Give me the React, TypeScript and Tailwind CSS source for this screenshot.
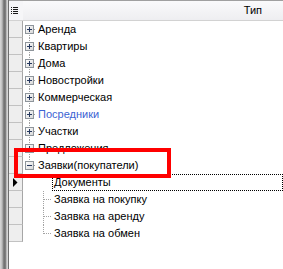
const FONT = "font-['Liberation_Sans',Arial,sans-serif]"

type Node = { label: string; level: 0 | 1; blue?: boolean; expanded?: boolean; focused?: boolean }

const NODES: Node[] = [
  { label: 'Аренда', level: 0 },
  { label: 'Квартиры', level: 0 },
  { label: 'Дома', level: 0 },
  { label: 'Новостройки', level: 0 },
  { label: 'Коммерческая', level: 0 },
  { label: 'Посредники', level: 0, blue: true },
  { label: 'Участки', level: 0 },
  { label: 'Предложения', level: 0 },
  { label: 'Заявки(покупатели)', level: 0, expanded: true },
  { label: 'Документы', level: 1, focused: true },
  { label: 'Заявка на покупку', level: 1 },
  { label: 'Заявка на аренду', level: 1 },
  { label: 'Заявка на обмен', level: 1 },
]

const LINE = '#a3a3a3'

// dotted connectors + expand box drawn for one row
function Gutter({ index }: { index: number }) {
  const node = NODES[index]
  if (node.level === 0) {
    const first = index === 0
    const last = index === 8
    return (
      <svg width="13" height="17" className="shrink-0">
        <defs>
          <linearGradient id={`bx${index}`} x1="0" y1="0" x2="1" y2="1">
            <stop offset="0" stopColor="#ffffff" />
            <stop offset="1" stopColor="#d6d6d6" />
          </linearGradient>
        </defs>
        <line x1="6.5" y1={first ? 8 : 0} x2="6.5" y2={last ? 8 : 17} stroke={LINE} strokeDasharray="1 1" />
        <line x1="11" y1="8.5" x2="13" y2="8.5" stroke={LINE} strokeDasharray="1 1" />
        <rect x="2.5" y="4.5" width="8" height="8" fill={`url(#bx${index})`} stroke="#8e959b" />
        <line x1="4" y1="8.5" x2="9" y2="8.5" stroke="#24375e" />
        {!node.expanded && <line x1="6.5" y1="6" x2="6.5" y2="11" stroke="#24375e" />}
      </svg>
    )
  }
  const j = index - 9
  return (
    <svg width="29" height="17" className="shrink-0">
      {j > 0 && (
        <>
          <line x1="20.5" y1="0" x2="20.5" y2={j === 3 ? 9 : 17} stroke={LINE} strokeDasharray="1 1" />
          <line x1="21" y1="8.5" x2="29" y2="8.5" stroke={LINE} strokeDasharray="1 1" />
        </>
      )}
    </svg>
  )
}

function ListIcon() {
  return (
    <svg width="7" height="8" className="block">
      {[0, 2, 4, 6].map(y => (
        <g key={y}>
          <rect x="0" y={y} width="1" height="1" fill="#1a1a1a" />
          <rect x="2" y={y} width="5" height="1" fill="#1a1a1a" />
        </g>
      ))}
    </svg>
  )
}

export default function App() {
  return (
    <div className={`relative w-[283px] h-[269px] overflow-hidden bg-white flex text-[11px] text-black ${FONT}`}>
      {/* window frame edge */}
      <div className="w-[8px] h-full shrink-0 bg-[linear-gradient(to_right,#d9d9d9_0%,#bdbdbd_25%,#6f6f6f_50%,#7b7b7b_68%,#c9c9c9_85%,#dedede_100%)]" />

      {/* row indicator column */}
      <div className="w-[15px] h-full shrink-0 border-l border-[#6e6e6e] flex flex-col">
        <div className="h-[21px] border-t border-b border-t-[#a0a0a0] border-b-[#d2d2d2] bg-[#f6f6f8] flex items-center pl-[2px]">
          <ListIcon />
        </div>
        {NODES.map((n, i) => (
          <div
            key={i}
            className="h-[17px] shrink-0 bg-[#eeeeee] border-b border-r border-b-[#c2c2c2] border-r-[#a6a6a6] flex items-center pl-[4px]"
          >
            {n.focused && (
              <svg width="5" height="9" className="block">
                <polygon points="0,0 4.5,4.5 0,9" fill="#000" />
              </svg>
            )}
          </div>
        ))}
      </div>

      {/* tree column */}
      <div className="flex-1 min-w-0 flex flex-col">
        <div className="h-[21px] shrink-0 border-t border-b border-t-[#a0a0a0] border-b-[#d2d2d2] bg-[linear-gradient(to_bottom,#fafafb,#eeeef1)] flex items-center justify-end pr-[21px]">
          <span className="leading-none">Тип</span>
        </div>
        {NODES.map((n, i) => (
          <div key={i} className="h-[17px] shrink-0 flex items-stretch whitespace-nowrap">
            <Gutter index={i} />
            <span
              className={`leading-[15px] pl-[1px] pr-[2px] border ${
                n.focused ? 'flex-1 border-dotted border-black' : 'border-transparent'
              } ${n.blue ? 'text-[#3b63d3]' : ''}`}
            >
              {n.label}
            </span>
          </div>
        ))}
      </div>

      {/* annotation */}
      <div className="absolute left-[14px] top-[148px] w-[157px] h-[30px] border-4 border-[#ff0000]" />
    </div>
  )
}
